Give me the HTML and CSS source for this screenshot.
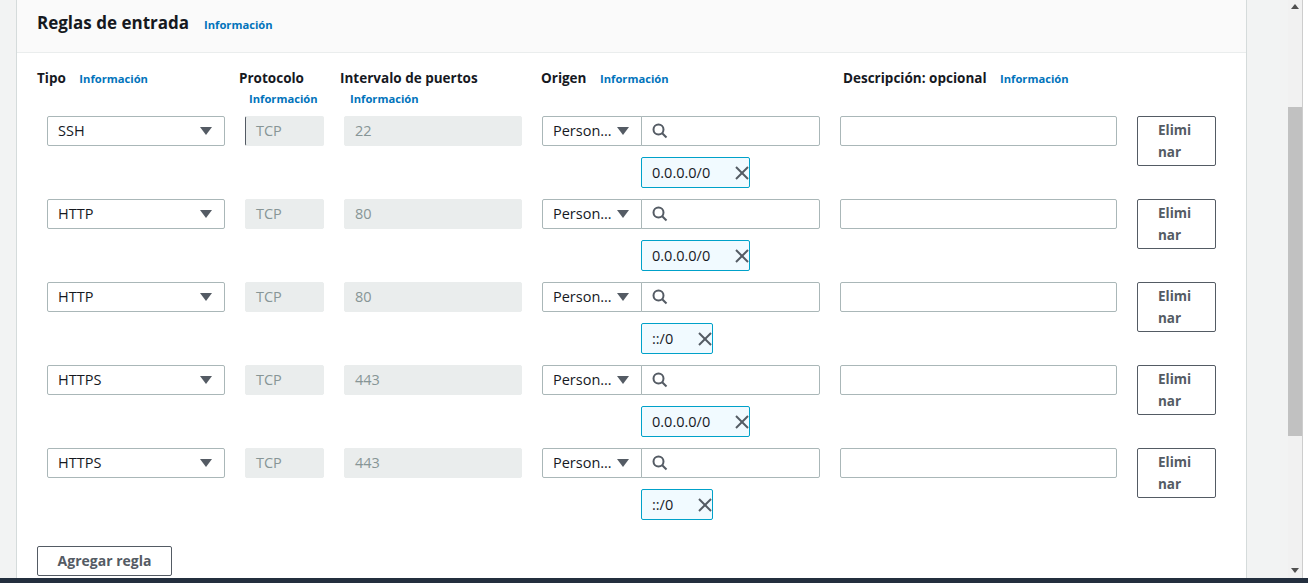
FILE: index.html
```html
<!DOCTYPE html>
<html lang="es">
<head>
<meta charset="utf-8">
<title>Reglas de entrada</title>
<link rel="stylesheet" href="styles.css">
</head>
<body>
<div class="screen">
  <div class="top">
    <main class="main">
      <section class="card">
        <header class="card-header">
          <h2 class="title">Reglas de entrada</h2>
          <a class="info info-title">Información</a>
        </header>
        <div class="card-body">
          <div class="col-heads">
            <div class="head"><span class="label">Tipo</span> <a class="info">Información</a></div>
            <div class="head"><span class="label">Protocolo</span> <a class="info">Información</a></div>
            <div class="head"><span class="label">Intervalo de puertos</span> <a class="info">Información</a></div>
            <div class="head"><span class="label">Origen</span> <a class="info">Información</a></div>
            <div class="head"><span class="label">Descripción: opcional</span> <a class="info">Información</a></div>
          </div>

          <div class="rules">
            <div class="rule">
              <div class="field select"><span>SSH</span><svg class="caret" width="12" height="8" viewBox="0 0 12 8"><polygon points="0,0 12,0 6,8"/></svg></div>
              <div class="field disabled cursor">TCP</div>
              <div class="field disabled">22</div>
              <div class="origin">
                <div class="field select small"><span>Person…</span><svg class="caret" width="12" height="8" viewBox="0 0 12 8"><polygon points="0,0 12,0 6,8"/></svg></div>
                <div class="field search"><svg class="mag" width="16" height="16" viewBox="0 0 16 16"><circle cx="6.5" cy="6.5" r="5"/><line x1="10.2" y1="10.2" x2="14.5" y2="14.5"/></svg></div>
                <div class="token"><span>0.0.0.0/0</span><svg class="x" width="14" height="14" viewBox="0 0 14 14"><line x1="1" y1="1" x2="13" y2="13"/><line x1="13" y1="1" x2="1" y2="13"/></svg></div>
              </div>
              <div class="field"></div>
              <button class="btn remove">Eliminar</button>
            </div>

            <div class="rule">
              <div class="field select"><span>HTTP</span><svg class="caret" width="12" height="8" viewBox="0 0 12 8"><polygon points="0,0 12,0 6,8"/></svg></div>
              <div class="field disabled">TCP</div>
              <div class="field disabled">80</div>
              <div class="origin">
                <div class="field select small"><span>Person…</span><svg class="caret" width="12" height="8" viewBox="0 0 12 8"><polygon points="0,0 12,0 6,8"/></svg></div>
                <div class="field search"><svg class="mag" width="16" height="16" viewBox="0 0 16 16"><circle cx="6.5" cy="6.5" r="5"/><line x1="10.2" y1="10.2" x2="14.5" y2="14.5"/></svg></div>
                <div class="token"><span>0.0.0.0/0</span><svg class="x" width="14" height="14" viewBox="0 0 14 14"><line x1="1" y1="1" x2="13" y2="13"/><line x1="13" y1="1" x2="1" y2="13"/></svg></div>
              </div>
              <div class="field"></div>
              <button class="btn remove">Eliminar</button>
            </div>

            <div class="rule">
              <div class="field select"><span>HTTP</span><svg class="caret" width="12" height="8" viewBox="0 0 12 8"><polygon points="0,0 12,0 6,8"/></svg></div>
              <div class="field disabled">TCP</div>
              <div class="field disabled">80</div>
              <div class="origin">
                <div class="field select small"><span>Person…</span><svg class="caret" width="12" height="8" viewBox="0 0 12 8"><polygon points="0,0 12,0 6,8"/></svg></div>
                <div class="field search"><svg class="mag" width="16" height="16" viewBox="0 0 16 16"><circle cx="6.5" cy="6.5" r="5"/><line x1="10.2" y1="10.2" x2="14.5" y2="14.5"/></svg></div>
                <div class="token"><span>::/0</span><svg class="x" width="14" height="14" viewBox="0 0 14 14"><line x1="1" y1="1" x2="13" y2="13"/><line x1="13" y1="1" x2="1" y2="13"/></svg></div>
              </div>
              <div class="field"></div>
              <button class="btn remove">Eliminar</button>
            </div>

            <div class="rule">
              <div class="field select"><span>HTTPS</span><svg class="caret" width="12" height="8" viewBox="0 0 12 8"><polygon points="0,0 12,0 6,8"/></svg></div>
              <div class="field disabled">TCP</div>
              <div class="field disabled">443</div>
              <div class="origin">
                <div class="field select small"><span>Person…</span><svg class="caret" width="12" height="8" viewBox="0 0 12 8"><polygon points="0,0 12,0 6,8"/></svg></div>
                <div class="field search"><svg class="mag" width="16" height="16" viewBox="0 0 16 16"><circle cx="6.5" cy="6.5" r="5"/><line x1="10.2" y1="10.2" x2="14.5" y2="14.5"/></svg></div>
                <div class="token"><span>0.0.0.0/0</span><svg class="x" width="14" height="14" viewBox="0 0 14 14"><line x1="1" y1="1" x2="13" y2="13"/><line x1="13" y1="1" x2="1" y2="13"/></svg></div>
              </div>
              <div class="field"></div>
              <button class="btn remove">Eliminar</button>
            </div>

            <div class="rule">
              <div class="field select"><span>HTTPS</span><svg class="caret" width="12" height="8" viewBox="0 0 12 8"><polygon points="0,0 12,0 6,8"/></svg></div>
              <div class="field disabled">TCP</div>
              <div class="field disabled">443</div>
              <div class="origin">
                <div class="field select small"><span>Person…</span><svg class="caret" width="12" height="8" viewBox="0 0 12 8"><polygon points="0,0 12,0 6,8"/></svg></div>
                <div class="field search"><svg class="mag" width="16" height="16" viewBox="0 0 16 16"><circle cx="6.5" cy="6.5" r="5"/><line x1="10.2" y1="10.2" x2="14.5" y2="14.5"/></svg></div>
                <div class="token"><span>::/0</span><svg class="x" width="14" height="14" viewBox="0 0 14 14"><line x1="1" y1="1" x2="13" y2="13"/><line x1="13" y1="1" x2="1" y2="13"/></svg></div>
              </div>
              <div class="field"></div>
              <button class="btn remove">Eliminar</button>
            </div>
          </div>

          <button class="btn add">Agregar regla</button>
        </div>
      </section>
    </main>
    <div class="scrollbar">
      <div class="sb-arrow"><svg width="8" height="5" viewBox="0 0 8 5"><polygon points="0,5 8,5 4,0"/></svg></div>
      <div class="sb-thumb"></div>
      <div class="sb-arrow sb-down"><svg width="8" height="5" viewBox="0 0 8 5"><polygon points="0,0 8,0 4,5"/></svg></div>
    </div>
    <div class="edge"></div>
  </div>
  <div class="footer-bar"></div>
</div>
</body>
</html>
```

FILE: styles.css
```css
* { box-sizing: border-box; }

body {
  margin: 0;
  font-family: "Open Sans", "Noto Sans", sans-serif;
  color: #16191f;
  background: #f2f3f3;
}

.screen {
  width: 1308px;
  height: 583px;
  display: flex;
  flex-direction: column;
  overflow: hidden;
}

.top {
  flex: 1;
  display: flex;
  min-height: 0;
}

.main {
  width: 1288px;
  flex: none;
  background: #f2f3f3;
  padding: 0 41px 0 16px;
  overflow: hidden;
}

.card {
  background: #fff;
  border-left: 1px solid #d5dbdb;
  border-right: 1px solid #d5dbdb;
  min-height: 100%;
}

.card-header {
  height: 53px;
  background: #fafafa;
  border-bottom: 1px solid #eaeded;
  padding: 11px 20px 0;
  display: flex;
  align-items: baseline;
}

.title {
  margin: 0;
  font-size: 17px;
  line-height: 24px;
  font-weight: 700;
}

.info {
  color: #0073bb;
  font-size: 11.2px;
  font-weight: 700;
  white-space: nowrap;
  text-decoration: none;
  margin-left: 10px;
  display: inline-block;
}

.info-title { margin-left: 15px; }

.card-body {
  padding: 15px 20px 0;
}

.col-heads {
  display: grid;
  grid-template-columns: 202px 101px 201px 302px auto;
  margin-bottom: 7px;
}

.head {
  font-size: 13.5px;
  line-height: 20px;
}

.label { font-weight: 700; }

.rules {
  display: flex;
  flex-direction: column;
  gap: 11px;
  padding-left: 10px;
}

.rule {
  display: grid;
  grid-template-columns: 178px 79px 178px 278px 277px 79px;
  column-gap: 20px;
  align-items: start;
  height: 72px;
}

.field {
  height: 30px;
  border: 1px solid #aab7b8;
  border-radius: 2px;
  background: #fff;
  font-size: 14.5px;
  line-height: 28px;
  padding: 0 10px;
  display: flex;
  align-items: center;
}

.field.select {
  justify-content: space-between;
  padding-right: 12px;
}

.caret { fill: #545b64; flex: none; }

.field.disabled {
  background: #eaeded;
  border-color: #eaeded;
  color: #879596;
}

.field.cursor { border-left-color: #545b64; }

.origin {
  display: grid;
  grid-template-columns: 100px 1fr;
  row-gap: 11px;
}

.field.small {
  border-radius: 2px 0 0 2px;
  padding-right: 12px;
}

.field.search {
  margin-left: -1px;
  border-radius: 0 2px 2px 0;
}

.mag {
  fill: none;
  stroke: #545b64;
  stroke-width: 2;
}

.token {
  grid-column: 2;
  justify-self: start;
  margin-left: -1px;
  height: 31px;
  display: flex;
  align-items: center;
  background: #f1faff;
  border: 1px solid #00a1c9;
  border-radius: 2px;
  padding-left: 10px;
  font-size: 14.5px;
  gap: 25px;
}

.x {
  stroke: #545b64;
  stroke-width: 2;
  flex: none;
}

.btn {
  font-family: inherit;
  background: #fff;
  border: 1px solid #545b64;
  border-radius: 2px;
  color: #545b64;
  font-weight: 700;
  font-size: 14px;
}

.remove {
  height: 50px;
  padding: 0 16px 0 20px;
  text-align: left;
  word-break: break-all;
  font-size: 13.5px;
  line-height: 22px;
  align-self: start;
}

.add {
  display: block;
  margin-top: 26px;
  height: 30px;
  width: 135px;
  padding: 0;
  line-height: 28px;
}

.scrollbar {
  width: 14px;
  flex: none;
  background: #f1f1f1;
  display: flex;
  flex-direction: column;
}

.sb-arrow {
  height: 12px;
  display: flex;
  align-items: center;
  justify-content: center;
  fill: #505050;
}

.sb-thumb {
  margin-top: 95px;
  height: 329px;
  background: #c1c1c1;
}

.sb-down {
  margin-top: auto;
  margin-bottom: 2px;
}

.edge {
  width: 6px;
  flex: none;
  border-left: 1px solid #cdcdcd;
  background: #fff;
}

.footer-bar {
  height: 5px;
  flex: none;
  background: #232f3e;
}
```
